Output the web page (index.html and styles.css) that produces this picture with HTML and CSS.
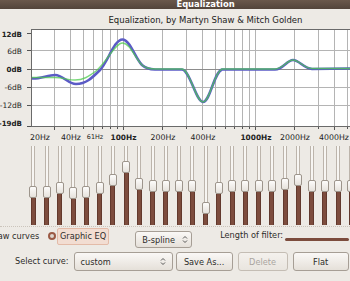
FILE: index.html
```html
<!doctype html>
<html>
<head>
  <meta charset="utf-8">
  <meta name="viewport" content="width=device-width,initial-scale=1">
  <title>Equalization</title>
  <link rel="stylesheet" href="styles.css">
</head>
<body>
  <div class="window">
    <div class="titlebar">Equalization</div>
    <div class="subtitle">Equalization, by Martyn Shaw &amp; Mitch Golden</div>

    <svg class="plot" width="350" height="117" viewBox="0 28 350 117">
      <rect class="plot-bg" x="31.5" y="29.5" width="330" height="97"/>
      <!-- frequency grid -->
      <g class="grid">
        <path d="M54.5 30V126M70.5 30V126M83.5 30V126M93.5 30V126M102.5 30V126M110.5 30V126M117.5 30V126M123.5 30V126
                 M162.5 30V126M186.5 30V126M202.5 30V126M215.5 30V126M225.5 30V126M234.5 30V126M242.5 30V126M249.5 30V126M255.5 30V126
                 M294.5 30V126M318.5 30V126M334.5 30V126M347.5 30V126"/>
        <path d="M32 50.5H350M32 87.5H350M32 105.5H350"/>
      </g>
      <path class="zero" d="M32 69.5H350"/>
      <rect class="plot-frame" x="31.5" y="29.5" width="330" height="97"/>
      <!-- ruler ticks -->
      <path class="ticks" d="M27 33.5H31M27 50.5H31M27 69.5H31M27 87.5H31M27 105.5H31M27 126.5H31
               M54.5 127V130M70.5 127V130M83.5 127V129M93.5 127V130M102.5 127V129M110.5 127V129M117.5 127V129M123.5 127V130
               M162.5 127V130M186.5 127V129M202.5 127V130M215.5 127V129M225.5 127V129M234.5 127V129M242.5 127V129M249.5 127V129M255.5 127V130
               M294.5 127V130M318.5 127V129M334.5 127V130M347.5 127V129"/>
      <!-- curves -->
      <path class="curve-blue" d="M32 78.5C40 79 48 75 55 75C63 75 68 84 76 84C86 84 92 78 100 70C108 62 114 39.5 122.5 39.5C130 39.5 135 58 142 65C146 68.5 150 69.3 155 69.5L182 69.5C190 70 196 102 203 102C210 102 214 72 222 69.5L275 69.5C283 69.5 287 60 293 60C299 60 304 68.5 312 69L350 68.5"/>
      <path class="curve-green" d="M32 77.5L55 77.5C63 77.5 68 80 75 80C83 80 88 77 96 71C106 63 115 43 122.5 43C130 43 135 58 142 65C146 68.5 150 69 155 69L182 69C190 70 196 102 203 102C210 102 214 72 222 69L275 69C283 69 287 60 293 60C299 60 304 68.5 312 68.5L350 68.5"/>
      <!-- dB ruler -->
      <text class="db major" x="22" y="36.5">12dB</text>
      <text class="db" x="22" y="53.5">6dB</text>
      <text class="db major" x="22" y="72">0dB</text>
      <text class="db" x="22" y="90">-6dB</text>
      <text class="db" x="22" y="108">-12dB</text>
      <text class="db major" x="22" y="126">-19dB</text>
      <!-- Hz ruler -->
      <text class="hz" x="40" y="140">20Hz</text>
      <text class="hz" x="71" y="140">40Hz</text>
      <text class="hz small" x="95" y="139">61Hz</text>
      <text class="hz major" x="123.5" y="140">100Hz</text>
      <text class="hz" x="163" y="140">200Hz</text>
      <text class="hz" x="203" y="140">400Hz</text>
      <text class="hz major" x="256" y="140">1000Hz</text>
      <text class="hz" x="295" y="140">2000Hz</text>
      <text class="hz" x="334" y="140">4000Hz</text>
    </svg>

    <div class="sliders">
      <div class="slider"><div class="track"></div><div class="knob"></div><div class="fill" style="height:27px"></div></div>
      <div class="slider"><div class="track"></div><div class="knob"></div><div class="fill" style="height:27px"></div></div>
      <div class="slider"><div class="track"></div><div class="knob"></div><div class="fill" style="height:31px"></div></div>
      <div class="slider"><div class="track"></div><div class="knob"></div><div class="fill" style="height:26px"></div></div>
      <div class="slider"><div class="track"></div><div class="knob"></div><div class="fill" style="height:27px"></div></div>
      <div class="slider"><div class="track"></div><div class="knob"></div><div class="fill" style="height:31px"></div></div>
      <div class="slider"><div class="track"></div><div class="knob"></div><div class="fill" style="height:39px"></div></div>
      <div class="slider"><div class="track"></div><div class="knob"></div><div class="fill" style="height:52px"></div></div>
      <div class="slider"><div class="track"></div><div class="knob"></div><div class="fill" style="height:35px"></div></div>
      <div class="slider"><div class="track"></div><div class="knob"></div><div class="fill" style="height:33px"></div></div>
      <div class="slider"><div class="track"></div><div class="knob"></div><div class="fill" style="height:33px"></div></div>
      <div class="slider"><div class="track"></div><div class="knob"></div><div class="fill" style="height:33px"></div></div>
      <div class="slider"><div class="track"></div><div class="knob"></div><div class="fill" style="height:33px"></div></div>
      <div class="slider"><div class="track"></div><div class="knob"></div><div class="fill" style="height:11px"></div></div>
      <div class="slider"><div class="track"></div><div class="knob"></div><div class="fill" style="height:31px"></div></div>
      <div class="slider"><div class="track"></div><div class="knob"></div><div class="fill" style="height:33px"></div></div>
      <div class="slider"><div class="track"></div><div class="knob"></div><div class="fill" style="height:33px"></div></div>
      <div class="slider"><div class="track"></div><div class="knob"></div><div class="fill" style="height:33px"></div></div>
      <div class="slider"><div class="track"></div><div class="knob"></div><div class="fill" style="height:33px"></div></div>
      <div class="slider"><div class="track"></div><div class="knob"></div><div class="fill" style="height:35px"></div></div>
      <div class="slider"><div class="track"></div><div class="knob"></div><div class="fill" style="height:39px"></div></div>
      <div class="slider"><div class="track"></div><div class="knob"></div><div class="fill" style="height:33px"></div></div>
      <div class="slider"><div class="track"></div><div class="knob"></div><div class="fill" style="height:33px"></div></div>
      <div class="slider"><div class="track"></div><div class="knob"></div><div class="fill" style="height:33px"></div></div>
      <div class="slider"><div class="track"></div><div class="knob"></div><div class="fill" style="height:33px"></div></div>
    </div>

    <div class="row row-mode">
      <span class="draw-label">Draw curves</span>
      <span class="radio"></span>
      <span class="eq-choice">Graphic EQ</span>
      <span class="btn spline">B-spline
        <svg class="updown" width="6" height="9" viewBox="0 0 6 9"><path d="M1 3.5L3 1.5L5 3.5M1 5.5L3 7.5L5 5.5"/></svg>
      </span>
      <span class="filter-label">Length of filter:</span>
      <span class="hslider"></span>
    </div>

    <div class="row row-curve">
      <span class="curve-label">Select curve:</span>
      <span class="btn combo">custom
        <svg class="updown" width="6" height="9" viewBox="0 0 6 9"><path d="M1 3.5L3 1.5L5 3.5M1 5.5L3 7.5L5 5.5"/></svg>
      </span>
      <span class="btn save">Save As...</span>
      <span class="btn delete">Delete</span>
      <span class="btn flat">Flat</span>
    </div>
  </div>
</body>
</html>
```

FILE: styles.css
```css
body {
  margin: 0;
  background: #edeae5;
  font-family: "DejaVu Sans", sans-serif;
  font-size: 8.2px;
  color: #2e2c2a;
  overflow: hidden;
}

.window {
  width: 350px;
  height: 281px;
  overflow: hidden;
}

.titlebar {
  width: 411px;
  height: 9px;
  line-height: 8px;
  text-align: center;
  color: #fff;
  font-weight: bold;
  font-size: 8.4px;
  background: linear-gradient(#6a584b, #52443a);
  overflow: hidden;
}

.subtitle {
  width: 411px;
  height: 19px;
  line-height: 22px;
  text-align: center;
  font-size: 8.5px;
  color: #222;
}

.plot {
  display: block;
}

.plot-bg {
  fill: #fff;
}

.plot-frame {
  fill: none;
  stroke: #6a6a6a;
  stroke-width: 1;
}

.grid path {
  stroke: #b4b4b4;
  stroke-width: 1;
  fill: none;
}

.zero {
  stroke: #8c8c8c;
  stroke-width: 1;
}

.ticks {
  stroke: #555;
  stroke-width: 1;
  fill: none;
}

.curve-blue {
  fill: none;
  stroke: #5b5bc6;
  stroke-width: 2.6;
}

.curve-green {
  fill: none;
  stroke: #4fcb4f;
  stroke-width: 1.4;
  opacity: 0.75;
}

.db {
  font-family: "DejaVu Sans", sans-serif;
  font-size: 7.5px;
  text-anchor: end;
  fill: #222;
}

.db.major {
  font-weight: bold;
  font-size: 7.1px;
}

.hz {
  font-family: "DejaVu Sans", sans-serif;
  font-size: 7.8px;
  text-anchor: middle;
  fill: #222;
}

.hz.major {
  font-weight: bold;
  font-size: 7.4px;
}

.hz.small {
  font-size: 6.4px;
}

.sliders {
  display: flex;
  height: 79px;
  margin-top: 1px;
  padding-left: 26.7px;
  padding-bottom: 1px;
  border-bottom: 1px dotted #cbc4bb;
}

.slider {
  flex: none;
  width: 13.26px;
  display: flex;
  flex-direction: column;
  align-items: center;
}

.track {
  flex: 1;
  width: 2px;
  background: #f7f5f2;
  border-left: 1px solid #bcb4ab;
  border-right: 1px solid #bcb4ab;
}

.knob {
  flex: none;
  width: 6px;
  height: 10px;
  border: 1px solid #9d958c;
  border-radius: 2px;
  background: linear-gradient(#fdfcfb, #e6e2dc);
}

.fill {
  flex: none;
  width: 3px;
  background: #7c4c3d;
  border-left: 0.5px solid #62392d;
  border-right: 0.5px solid #62392d;
}

.row {
  display: flex;
  align-items: flex-start;
  white-space: nowrap;
}

.row-mode {
  height: 20px;
  margin-top: 1px;
}

.draw-label {
  width: 50px;
  margin-left: -12px;
  line-height: 16px;
  text-align: right;
}

.radio {
  width: 4px;
  height: 4px;
  margin: 3.5px 0 0 10px;
  border: 2.5px solid #9b5a45;
  border-radius: 50%;
  background: #ddd6ce;
}

.eq-choice {
  margin-left: 1px;
  padding: 0 2px;
  height: 15px;
  line-height: 15px;
  background: #f2ddd2;
  border: 1px solid #e3bba8;
  border-radius: 2px;
}

.btn {
  display: flex;
  align-items: center;
  box-sizing: border-box;
  border: 1px solid #a69e95;
  border-radius: 3px;
  background: linear-gradient(#faf8f6, #e5e0d9);
  color: #2e2c2a;
}

.updown {
  margin-left: auto;
}

.updown path {
  fill: none;
  stroke: #555;
  stroke-width: 1;
}

.spline {
  width: 57px;
  height: 17px;
  margin: 3px 0 0 26px;
  padding: 0 3px 0 6px;
}

.filter-label {
  margin-left: 28px;
  line-height: 15px;
}

.hslider {
  width: 64px;
  height: 3px;
  margin: 10px 0 0 2px;
  border-radius: 1.5px;
  background: #7c4c3d;
}

.row-curve {
  height: 21px;
  margin-top: 3px;
  padding-left: 15px;
}

.curve-label {
  line-height: 21px;
}

.row-curve .btn {
  height: 19px;
  margin-top: 1px;
  justify-content: center;
}

.combo {
  width: 99px;
  margin-left: 5px;
  padding: 0 6px 0 6px;
}

.row-curve .combo {
  justify-content: flex-start;
}

.save {
  width: 57px;
  margin-left: 3px;
}

.delete {
  width: 50px;
  margin-left: 5px;
  color: #aaa59f;
  border-color: #c4bdb4;
  background: linear-gradient(#f4f1ed, #e9e5df);
}

.flat {
  width: 56px;
  margin-left: 5px;
}
```
